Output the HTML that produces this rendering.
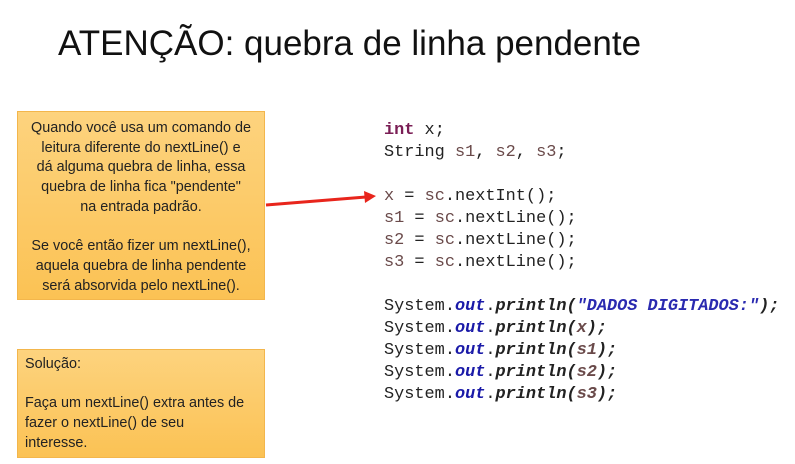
<!DOCTYPE html>
<html><head><meta charset="utf-8"><style>
body{margin:0;width:795px;height:464px;background:#fff;position:relative;overflow:hidden;font-family:"Liberation Sans",sans-serif}
.t{position:absolute;left:58px;top:24px;font-size:35px;color:#111;white-space:nowrap}
.b{position:absolute;left:17px;width:248px;background:linear-gradient(#fdd37e,#fbc254);border:1px solid #f3b64c;box-sizing:border-box;font-size:14.4px;line-height:19.7px;color:#222;white-space:nowrap}
.c{position:absolute;left:384px;font-family:"Liberation Mono",monospace;font-size:16.9px;line-height:22px;color:#222;white-space:pre}
.k{color:#7a1e55;font-weight:bold}.v{color:#6a4a4a}.o{color:#1a1aa8;font-weight:bold;font-style:italic}.i{font-style:italic;font-weight:bold}.s{color:#2a2ab0;font-style:italic;font-weight:bold}
</style></head><body>
<div class="t">ATENÇÃO: quebra de linha pendente</div>
<div class="b" style="top:111px;height:189px;text-align:center;padding-top:7px">Quando você usa um comando de<br>leitura diferente do nextLine() e<br>dá alguma quebra de linha, essa<br>quebra de linha fica "pendente"<br>na entrada padrão.<br><br>Se você então fizer um nextLine(),<br>aquela quebra de linha pendente<br>será absorvida pelo nextLine().</div>
<div class="b" style="top:349px;height:109px;padding:5px 7px">Solução:<br><br>Faça um nextLine() extra antes de<br>fazer o nextLine() de seu<br>interesse.</div>
<svg style="position:absolute;left:0;top:0" width="795" height="464"><line x1="266" y1="205" x2="366" y2="197" stroke="#e8251c" stroke-width="3"/><polygon points="376,196 364,191 365,203" fill="#e8251c"/></svg>
<div class="c" style="top:120px"><span class="k">int</span> x;
String <span class="v">s1</span>, <span class="v">s2</span>, <span class="v">s3</span>;

<span class="v">x</span> = <span class="v">sc</span>.nextInt();
<span class="v">s1</span> = <span class="v">sc</span>.nextLine();
<span class="v">s2</span> = <span class="v">sc</span>.nextLine();
<span class="v">s3</span> = <span class="v">sc</span>.nextLine();

System.<span class="o">out</span>.<span class="i">println(</span><span class="s">"DADOS DIGITADOS:"</span><span class="i">);</span>
System.<span class="o">out</span>.<span class="i">println(<span class="v">x</span>);</span>
System.<span class="o">out</span>.<span class="i">println(<span class="v">s1</span>);</span>
System.<span class="o">out</span>.<span class="i">println(<span class="v">s2</span>);</span>
System.<span class="o">out</span>.<span class="i">println(<span class="v">s3</span>);</span></div>
</body></html>
